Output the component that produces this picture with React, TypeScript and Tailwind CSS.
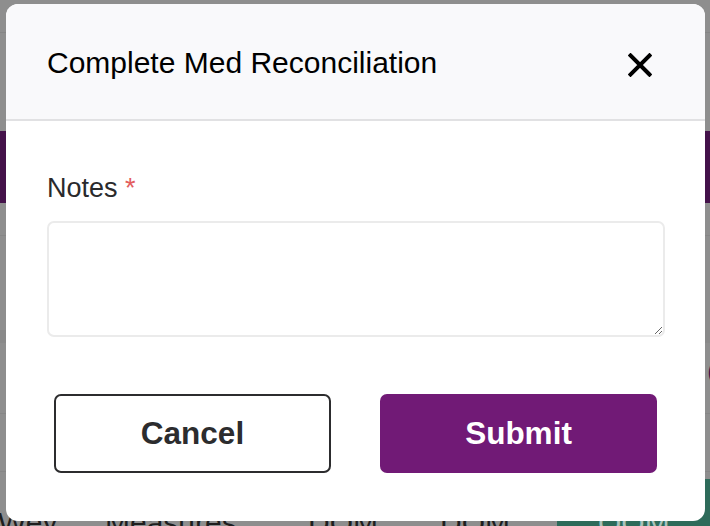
import React from 'react';

function CloseIcon() {
  return (
    <svg width="24" height="24" viewBox="0 0 24 24" fill="none" aria-hidden="true">
      <path d="M2.5 2.5 L21.5 21.5 M21.5 2.5 L2.5 21.5" stroke="#000" strokeWidth="4" strokeLinecap="square" />
    </svg>
  );
}

function BackgroundPage() {
  return (
    <div className="flex flex-col h-full">
      <div className="h-[33px] shrink-0 border-b border-[#858585]"></div>
      <div className="h-[98px] shrink-0"></div>
      <div className="h-[72px] shrink-0 bg-[#44124a]"></div>
      <div className="h-[33px] shrink-0 border-b border-[#868686]"></div>
      <div className="h-[94px] shrink-0"></div>
      <div className="h-[13px] shrink-0 bg-[#898989]"></div>
      <div className="h-[71px] shrink-0 border-b border-[#868686] flex items-center justify-end">
        <span className="text-[26px] leading-none text-[#43124a] -mr-[6px] -mt-[14px]">(</span>
      </div>
      <div className="h-[58px] shrink-0 border-b border-[#868686]"></div>
      <div className="flex-1 flex items-end text-[30px] leading-none text-[#1e1e1e] -mb-[12px]">
        <span className="w-[107px] shrink-0 -ml-[2px]">Wey</span>
        <span className="w-[203px] shrink-0">Measures</span>
        <span className="w-[132px] shrink-0">DOM</span>
        <span className="w-[117px] shrink-0">DOM</span>
        <div className="flex-1 self-stretch mt-[7px] bg-[#2e6b5a] flex items-end pl-[41px] text-[#a9c3bb]">
          <span>OOM</span>
        </div>
      </div>
    </div>
  );
}

export default function App() {
  return (
    <div className="relative w-[710px] h-[526px] overflow-hidden bg-[#8e8e8e] font-['Liberation_Sans',Arial,sans-serif]">
      <BackgroundPage />

      <div className="absolute left-[6px] top-[4px] w-[699px] h-[517px] rounded-[12px] bg-white overflow-hidden flex flex-col">
        <div className="h-[117px] shrink-0 bg-[#f9f9fb] border-b-2 border-[#e1e1e3] flex items-center justify-between pl-[41px] pr-[53px]">
          <h2 className="text-[30px] leading-none text-black pt-[2px]">Complete Med Reconciliation</h2>
          <button className="mt-[7px]" aria-label="Close">
            <CloseIcon />
          </button>
        </div>

        <div className="flex-1 pt-[51px] px-[41px]">
          <label className="block text-[27px] leading-[32px] text-[#2a2a2c]">
            Notes <span className="text-[#e35d5d]">*</span>
          </label>
          <textarea className="block mt-[17px] w-[618px] h-[116px] border-2 border-[#ebebeb] rounded-[7px] resize-y outline-none"></textarea>

          <div className="flex gap-[49px] ml-[7px] mt-[57px]">
            <button className="w-[277px] h-[79px] rounded-[7px] border-2 border-[#2c2c2e] bg-white text-[#2c2c2e] text-[31.5px] font-bold">
              Cancel
            </button>
            <button className="w-[277px] h-[79px] rounded-[7px] bg-[#711a76] text-white text-[31.5px] font-bold">
              Submit
            </button>
          </div>
        </div>
      </div>
    </div>
  );
}
